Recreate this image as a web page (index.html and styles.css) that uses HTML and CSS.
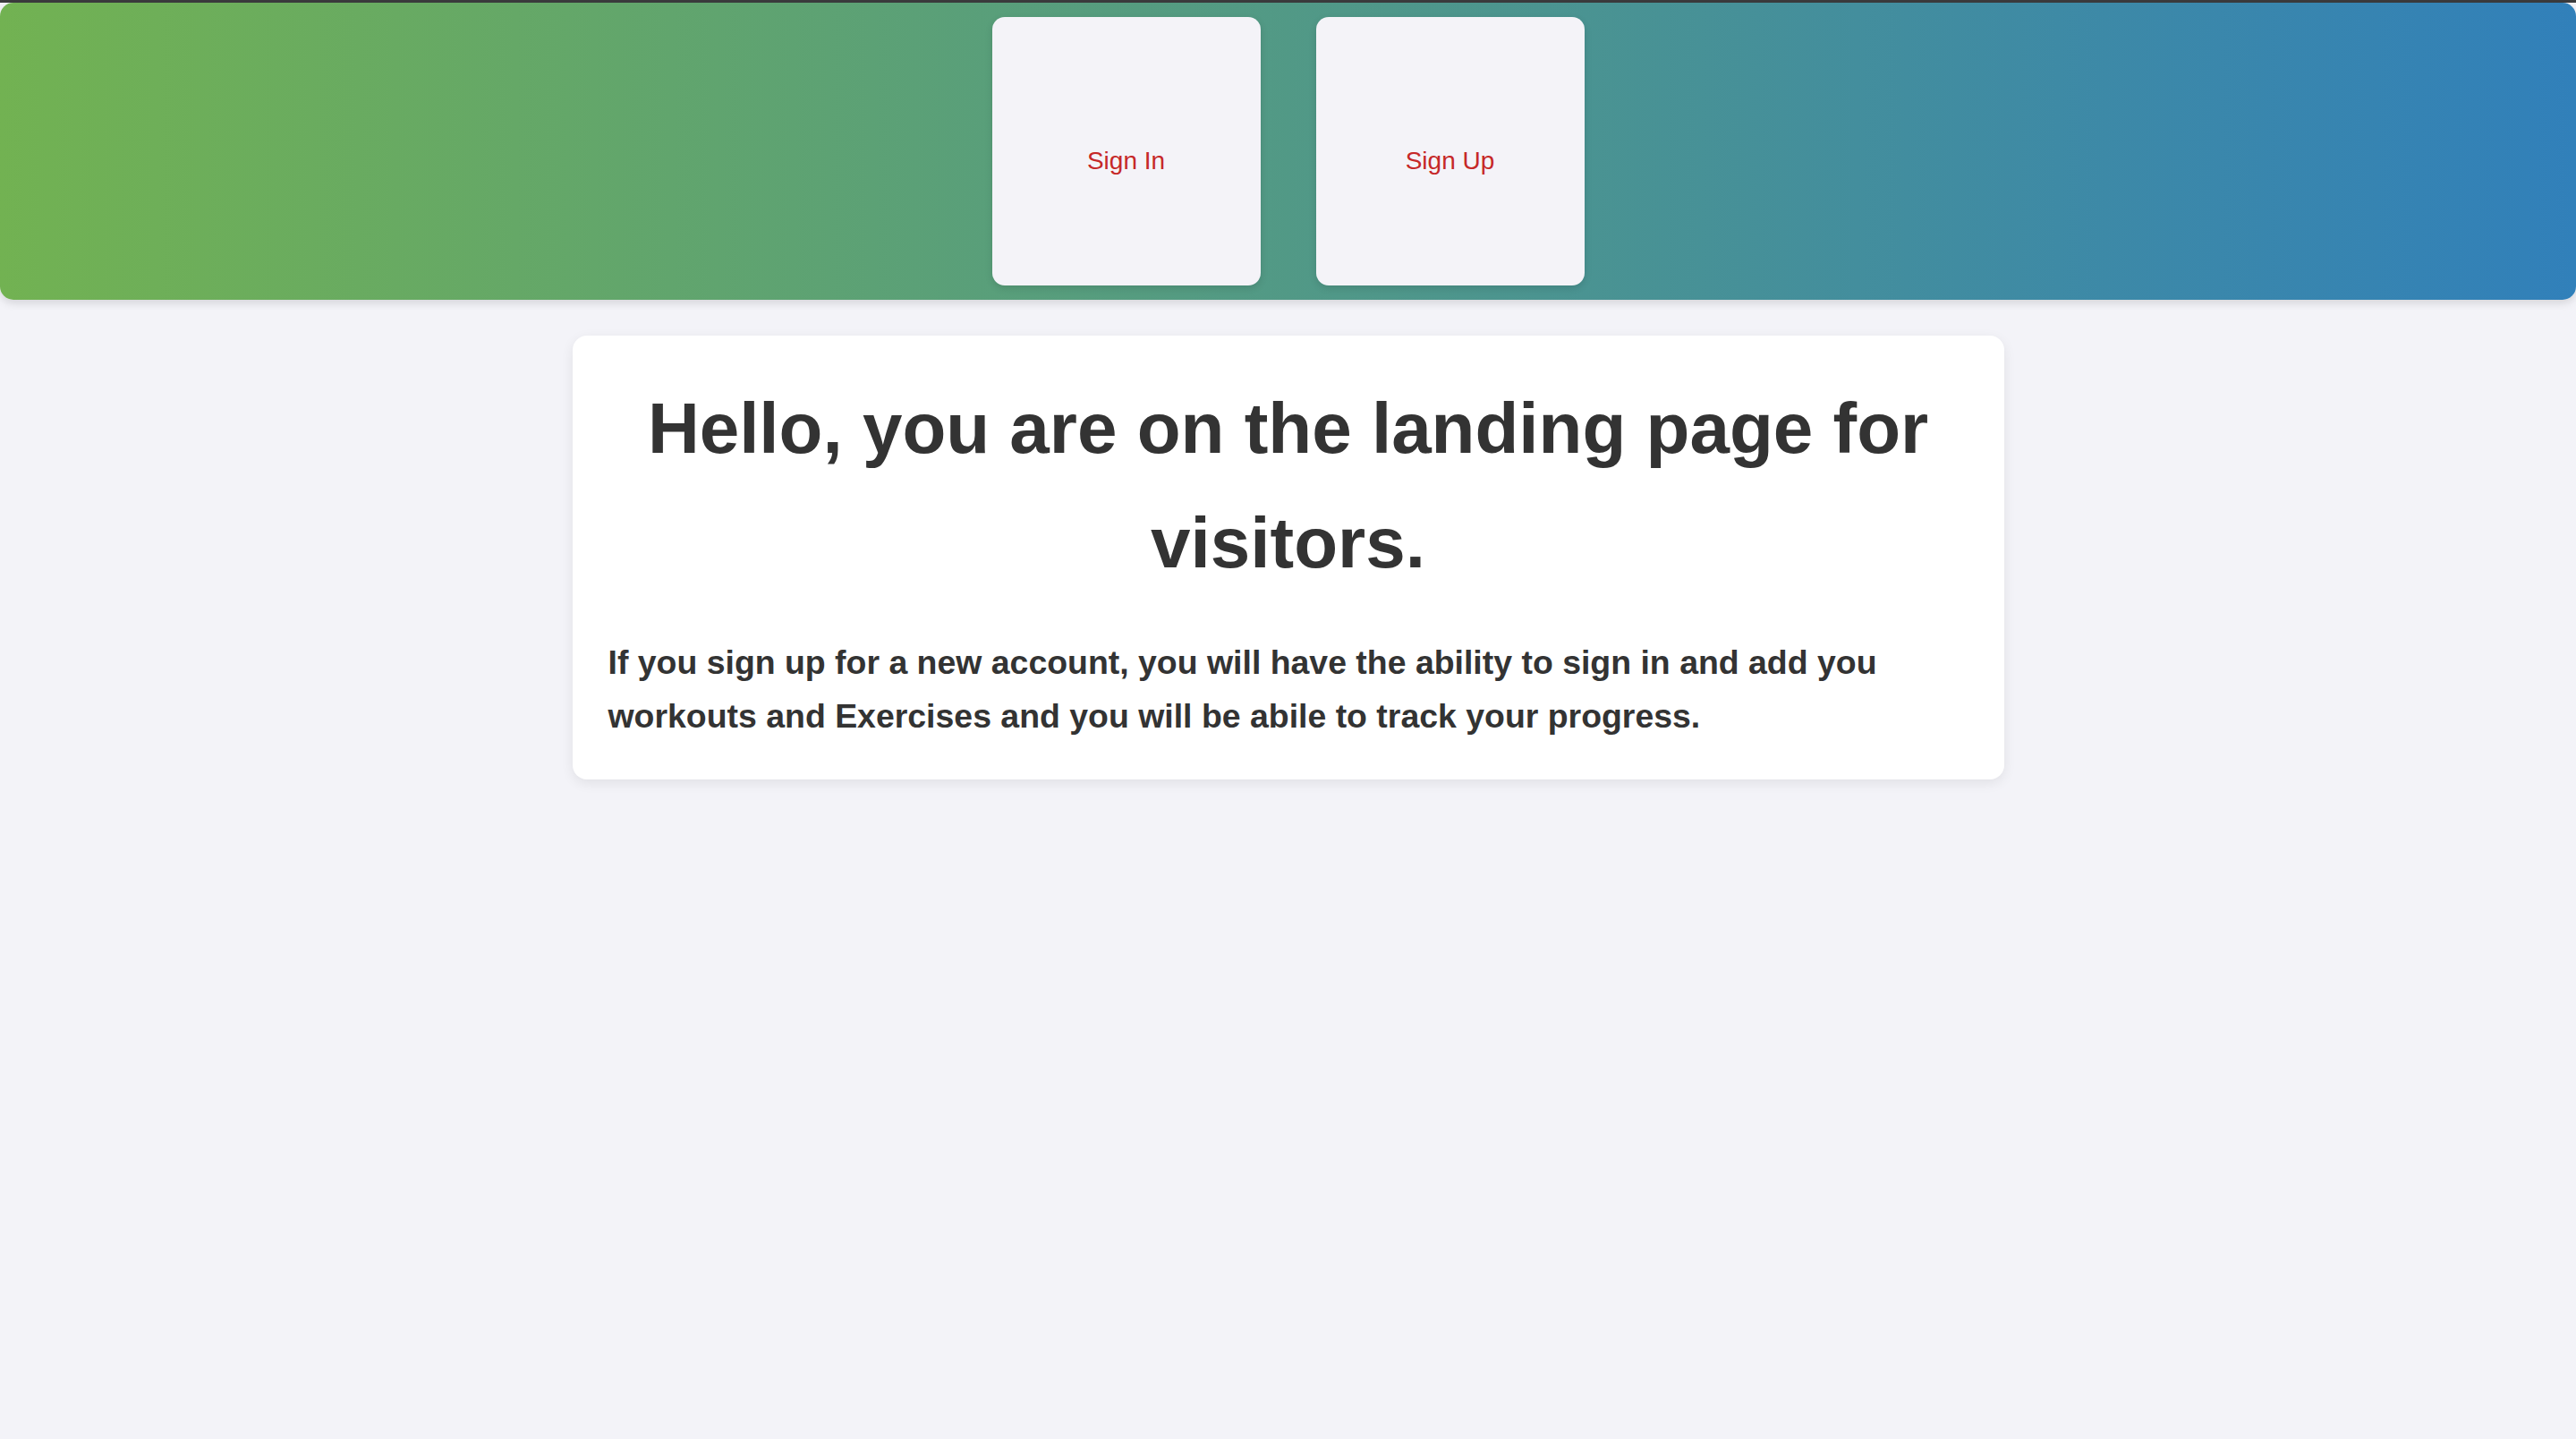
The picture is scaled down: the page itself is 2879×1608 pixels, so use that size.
FILE: index.html
```html
<!DOCTYPE html>
<html lang="en">
<head>
<meta charset="utf-8">
<title>Landing</title>
<link rel="stylesheet" href="styles.css">
</head>
<body>
<div class="topline"></div>
<header class="header">
  <nav class="nav">
    <a class="nav-card" href="#">Sign In</a>
    <a class="nav-card" href="#">Sign Up</a>
  </nav>
</header>
<main class="main">
  <section class="card">
    <h1 class="title">Hello, you are on the landing page for visitors.</h1>
    <p class="lead">If you sign up for a new account, you will have the ability to sign in and add you workouts and Exercises and you will be abile to track your progress.</p>
  </section>
</main>
</body>
</html>
```
FILE: styles.css
```css
html, body {
  margin: 0;
  padding: 0;
}
body {
  background: #f3f3f8;
  font-family: "Liberation Sans", Arial, sans-serif;
  color: #333333;
  min-height: 100vh;
}
.topline {
  height: 3px;
  background: #3b3b3d;
}
.header {
  background: linear-gradient(to right, #72b252, #3180ba);
  border-radius: 15px;
  padding: 16px 0 16px;
  display: flex;
  justify-content: center;
  box-shadow: 0 4px 10px rgba(0, 0, 0, 0.12);
}
.nav {
  display: flex;
  gap: 62px;
}
.nav-card {
  width: 300px;
  height: 300px;
  box-sizing: border-box;
  padding-top: 22px;
  background: #f4f3f8;
  border-radius: 14px;
  display: flex;
  align-items: center;
  justify-content: center;
  color: #c62828;
  text-decoration: none;
  font-size: 28px;
  box-shadow: 0 3px 8px rgba(0, 0, 0, 0.12);
}
.main {
  display: flex;
  justify-content: center;
  padding-top: 40px;
}
.card {
  width: 1600px;
  box-sizing: border-box;
  background: #ffffff;
  border-radius: 16px;
  padding: 40px 40px 40px;
  box-shadow: 0 4px 14px rgba(0, 0, 0, 0.08);
}
.title {
  margin: 0;
  font-size: 80px;
  line-height: 1.6;
  font-weight: 700;
  text-align: center;
  color: #333333;
}
.lead {
  margin: 40px 0 0;
  font-size: 37.44px;
  line-height: 1.6;
  font-weight: 700;
  color: #333333;
}
```
